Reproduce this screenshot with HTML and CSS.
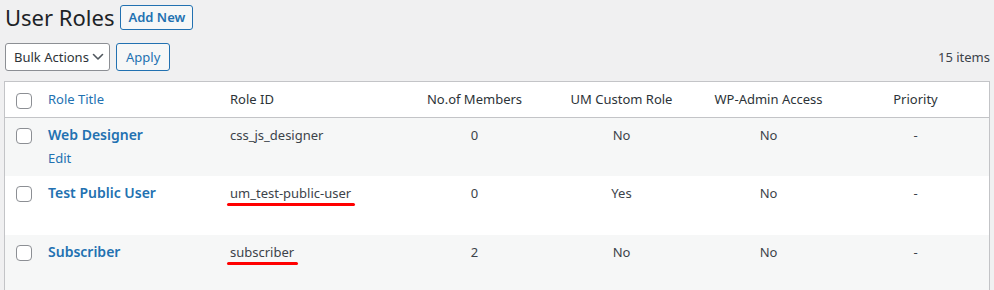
FILE: index.html
```html
<!DOCTYPE html>
<html lang="en">
<head>
    <meta charset="UTF-8">
    <title>User Roles</title>
    <link rel="stylesheet" href="styles.css">
</head>
<body>
    <div class="wrap">
        <div class="page-head">
            <h1>User Roles</h1>
            <a class="page-title-action" href="#">Add New</a>
        </div>

        <div class="tablenav">
            <div class="bulk">
                <div class="select-box">
                    <span>Bulk Actions</span>
                    <svg width="12" height="8" viewBox="0 0 12 8"><path d="M1.5 1.5 6 6l4.5-4.5" fill="none" stroke="#50575e" stroke-width="1.6" stroke-linecap="round" stroke-linejoin="round"/></svg>
                </div>
                <button class="button">Apply</button>
            </div>
            <span class="displaying-num">15 items</span>
        </div>

        <table class="roles">
            <colgroup>
                <col class="col-cb">
                <col class="col-title">
                <col class="col-id">
                <col><col><col><col>
            </colgroup>
            <thead>
                <tr>
                    <td class="check-column"><span class="cb"></span></td>
                    <th class="sortable"><a href="#">Role Title</a></th>
                    <th>Role ID</th>
                    <th class="center">No.of Members</th>
                    <th class="center">UM Custom Role</th>
                    <th class="center">WP-Admin Access</th>
                    <th class="center">Priority</th>
                </tr>
            </thead>
            <tbody>
                <tr class="alt">
                    <td class="check-column"><span class="cb"></span></td>
                    <td>
                        <a class="row-title" href="#">Web Designer</a>
                        <div class="row-actions"><a href="#">Edit</a></div>
                    </td>
                    <td>css_js_designer</td>
                    <td class="center">0</td>
                    <td class="center">No</td>
                    <td class="center">No</td>
                    <td class="center">-</td>
                </tr>
                <tr>
                    <td class="check-column"><span class="cb"></span></td>
                    <td>
                        <a class="row-title" href="#">Test Public User</a>
                        <div class="row-actions hidden"><a href="#">Edit</a></div>
                    </td>
                    <td><span class="marked">um_test-public-user</span></td>
                    <td class="center">0</td>
                    <td class="center">Yes</td>
                    <td class="center">No</td>
                    <td class="center">-</td>
                </tr>
                <tr class="alt">
                    <td class="check-column"><span class="cb"></span></td>
                    <td>
                        <a class="row-title" href="#">Subscriber</a>
                        <div class="row-actions hidden"><a href="#">Edit</a></div>
                    </td>
                    <td><span class="marked">subscriber</span></td>
                    <td class="center">2</td>
                    <td class="center">No</td>
                    <td class="center">No</td>
                    <td class="center">-</td>
                </tr>
            </tbody>
        </table>
    </div>
</body>
</html>
```

FILE: styles.css
```css
body {
    margin: 0;
    background: #f0f0f1;
    color: #3c434a;
    font-family: "Noto Sans", "Open Sans", sans-serif;
    font-size: 13px;
    line-height: 1.4em;
    overflow: hidden;
}
a {
    color: #2271b1;
    text-decoration: none;
}
.wrap {
    width: 985px;
    padding: 4px 0 0 4px;
}
.page-head {
    display: flex;
    align-items: center;
    gap: 6px;
    height: 26px;
}
h1 {
    margin: 0 0 0 1px;
    font-size: 22px;
    font-weight: 400;
    line-height: 26px;
    color: #1d2327;
}
.page-title-action {
    display: block;
    border: 1px solid #2271b1;
    border-radius: 3px;
    background: #f6f7f7;
    padding: 0 7px;
    line-height: 23px;
    font-size: 13px;
    font-weight: 600;
}
.tablenav {
    display: flex;
    justify-content: space-between;
    align-items: center;
    margin: 13px 0 10px;
    height: 28px;
}
.bulk {
    display: flex;
    gap: 6px;
    margin-left: 1px;
}
.select-box {
    display: flex;
    align-items: center;
    justify-content: space-between;
    box-sizing: border-box;
    width: 105px;
    height: 28px;
    padding: 0 5px 0 8px;
    background: #fff;
    border: 1px solid #8c8f94;
    border-radius: 3px;
    color: #2c3338;
}
.button {
    box-sizing: border-box;
    height: 28px;
    padding: 0 9px;
    border: 1px solid #2271b1;
    border-radius: 3px;
    background: #f6f7f7;
    color: #2271b1;
    font: inherit;
}
.displaying-num {
    margin-right: -1px;
    color: #3c434a;
}
.roles {
    width: 986px;
    table-layout: fixed;
    border-collapse: separate;
    border-spacing: 0;
    background: #fff;
    border: 1px solid #c3c4c7;
    border-bottom: none;
}
.col-cb { width: 33px; }
.col-title { width: 182px; }
.col-id { width: 181px; }
th, td {
    padding: 8px 10px;
    text-align: left;
    vertical-align: top;
    font-weight: 400;
}
thead th, thead td {
    border-bottom: 1px solid #c3c4c7;
    color: #2c3338;
    height: 19px;
}
thead th.sortable a {
    color: #2271b1;
}
.center {
    text-align: center !important;
}
.check-column {
    padding: 11px 0 0 11px;
}
tbody .check-column {
    padding-top: 10px;
}
.cb {
    display: block;
    box-sizing: border-box;
    width: 16px;
    height: 16px;
    background: #fff;
    border: 1px solid #8c8f94;
    border-radius: 4px;
}
tbody td {
    padding-bottom: 9px;
}
tr.alt {
    background: #f6f7f7;
}
.row-title {
    font-size: 14px;
    font-weight: 600;
}
.row-actions {
    padding: 5px 0 0;
}
.row-actions.hidden {
    visibility: hidden;
}
.marked {
    position: relative;
}
.marked::after {
    content: "";
    position: absolute;
    left: -3px;
    right: -4px;
    bottom: -4px;
    height: 3px;
    border-radius: 2px;
    background: #f00;
}
```
